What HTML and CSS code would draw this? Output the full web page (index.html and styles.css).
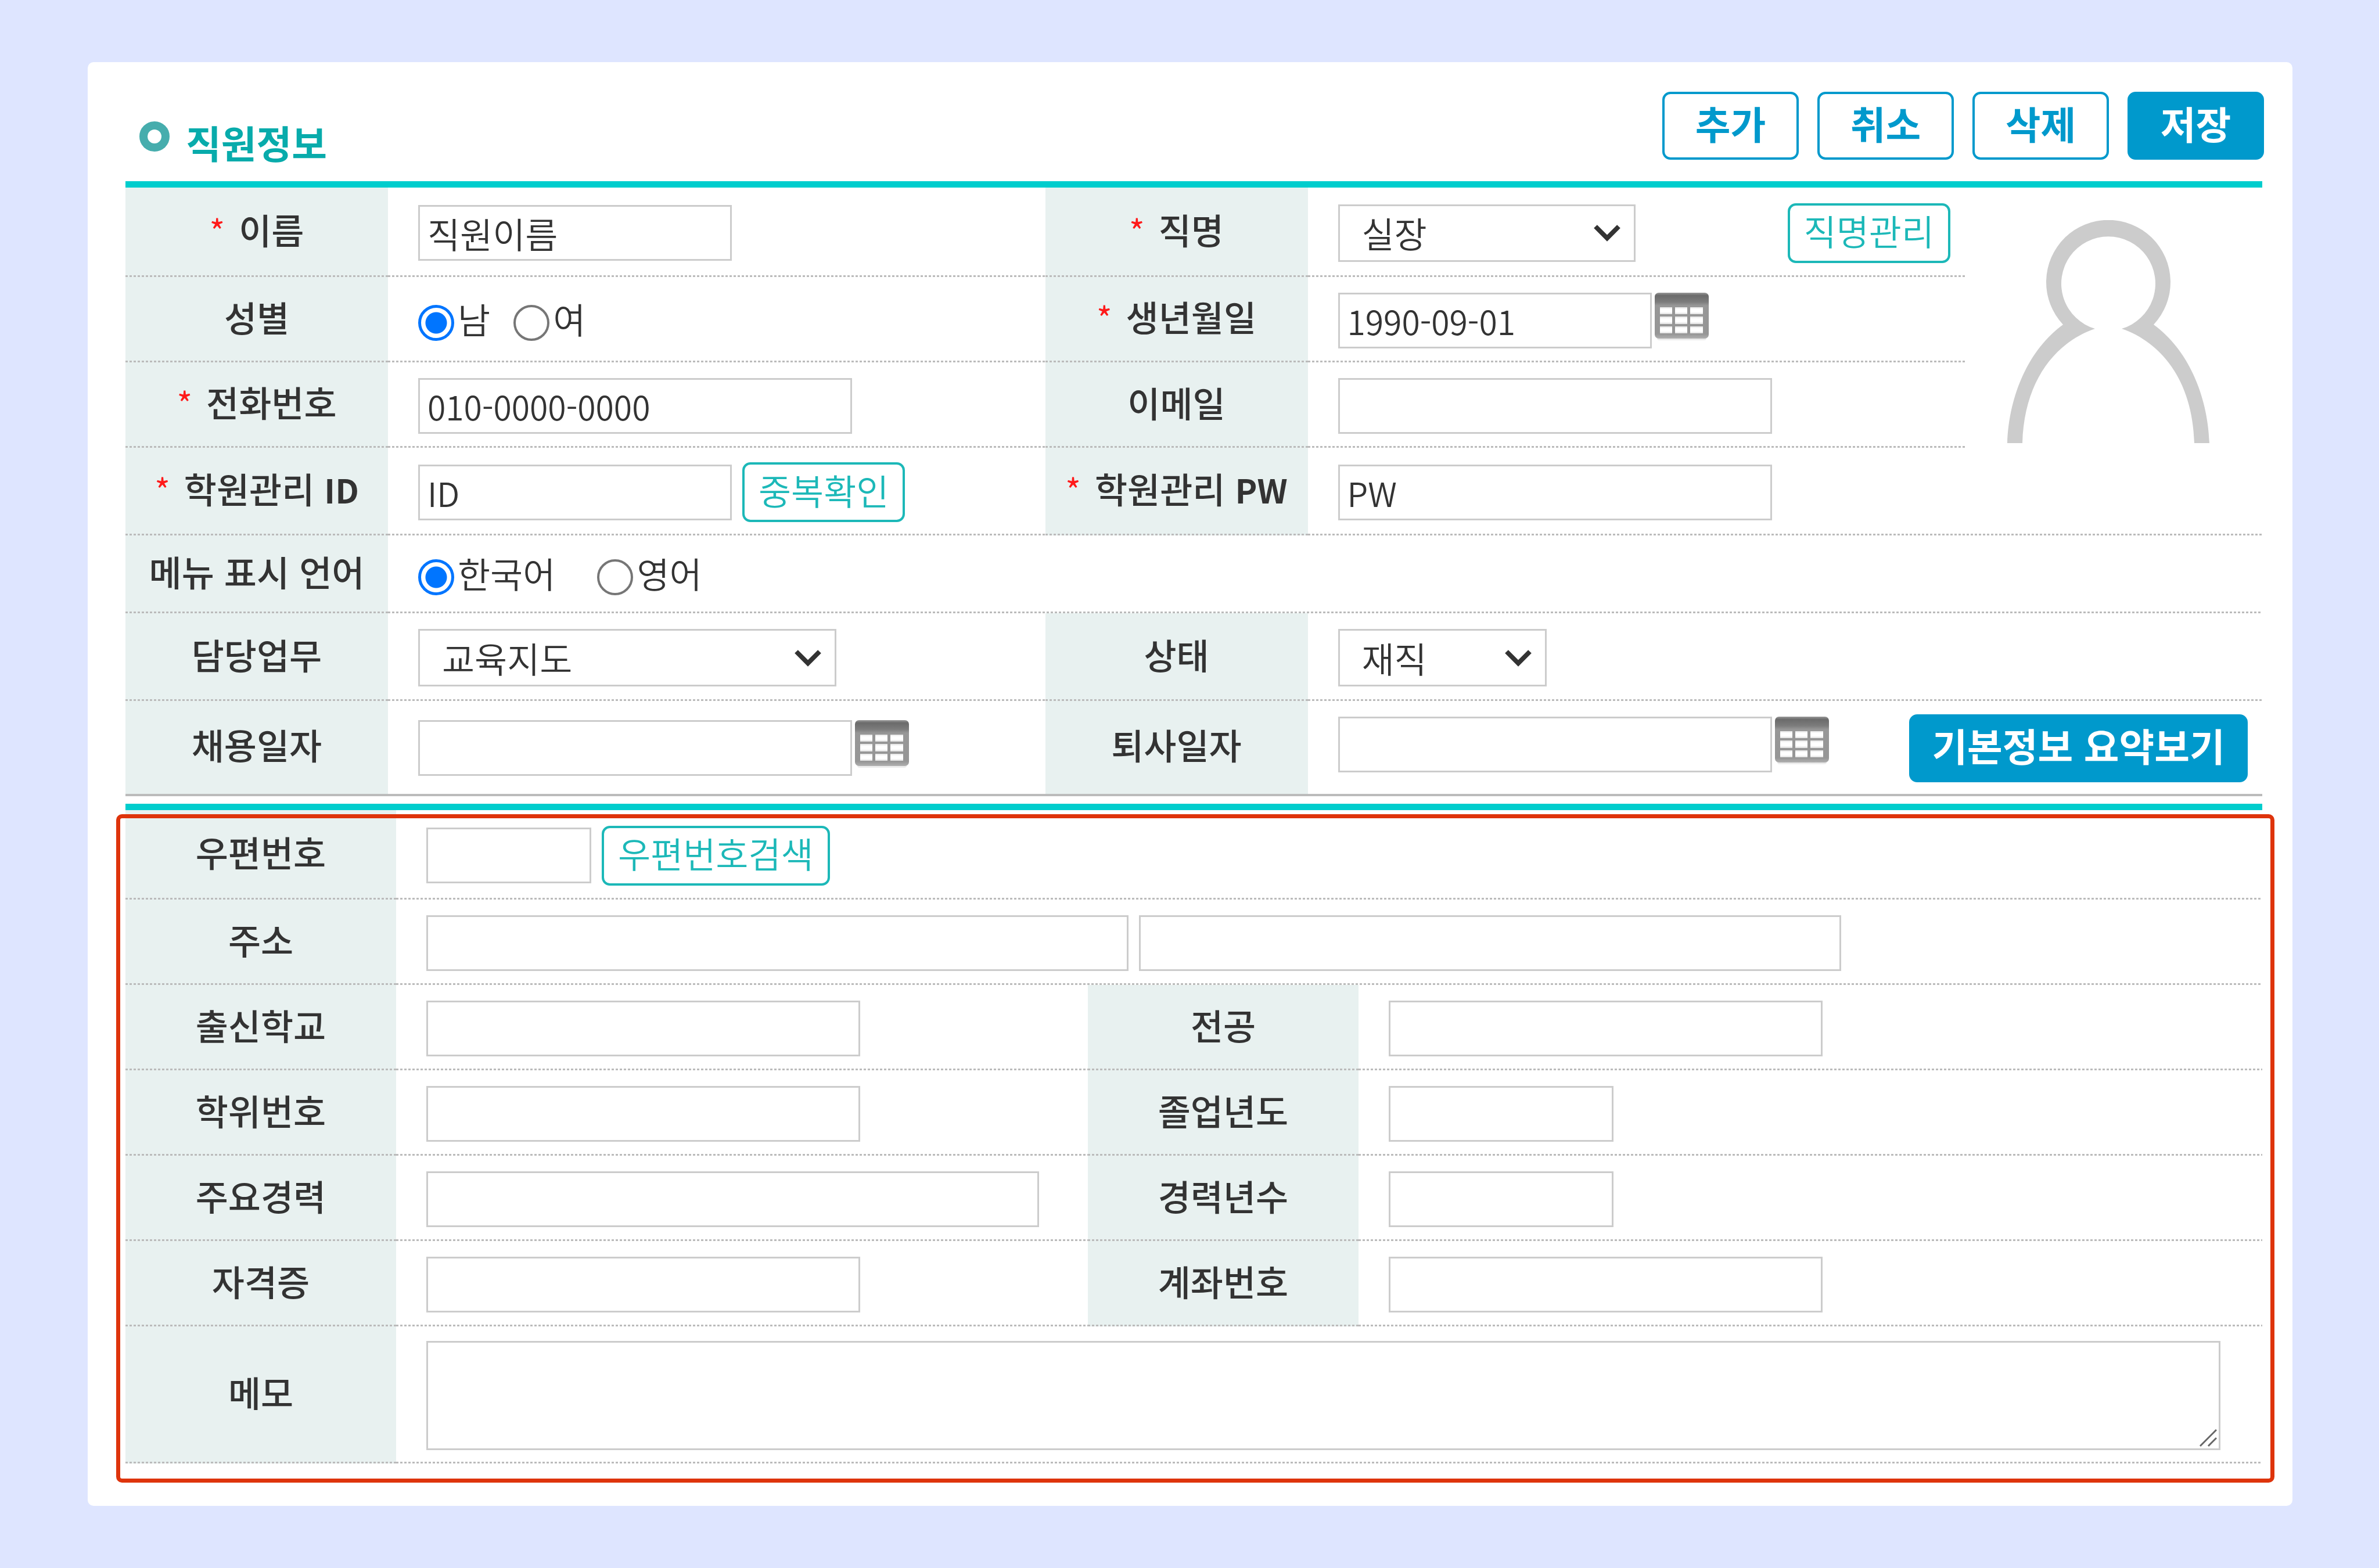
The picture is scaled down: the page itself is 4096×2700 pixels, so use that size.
FILE: index.html
```html
<!DOCTYPE html>
<html lang="ko">
<head>
<meta charset="utf-8">
<meta name="viewport" content="width=device-width, initial-scale=1">
<title>직원정보</title>
<link rel="stylesheet" href="styles.css">
</head>
<body>
<svg class="sprite" aria-hidden="true">
  <defs>
    <linearGradient id="cal-head" x1="0" y1="0" x2="0" y2="1">
      <stop offset="0" stop-color="#9a9a9a"/>
      <stop offset=".06" stop-color="#6b6b6b"/>
      <stop offset=".2" stop-color="#7c7c7c"/>
      <stop offset=".28" stop-color="#979797"/>
      <stop offset=".9" stop-color="#969696"/>
      <stop offset="1" stop-color="#b0b0b0"/>
    </linearGradient>
    <linearGradient id="cal-cell" x1="0" y1="0" x2="0" y2="1">
      <stop offset="0" stop-color="#e4e4e4"/>
      <stop offset=".3" stop-color="#fff"/>
      <stop offset=".7" stop-color="#fff"/>
      <stop offset="1" stop-color="#dedede"/>
    </linearGradient>
    <symbol id="calendar" viewBox="0 0 93 82">
      <rect x="4" y="74" width="85" height="8" rx="4" fill="#ececec"/>
      <rect width="93" height="79" rx="7" fill="url(#cal-head)"/>
      <g fill="url(#cal-cell)">
        <rect x="9" y="25" width="21" height="12"/><rect x="35" y="25" width="21" height="12"/><rect x="61" y="25" width="22" height="12"/>
        <rect x="9" y="41" width="21" height="13"/><rect x="35" y="41" width="21" height="13"/><rect x="61" y="41" width="22" height="13"/>
        <rect x="9" y="58" width="21" height="12"/><rect x="35" y="58" width="21" height="12"/><rect x="61" y="58" width="22" height="12"/>
      </g>
    </symbol>
  </defs>
</svg>

<main class="card">
  <form>
    <header class="header">
      <h1 class="title"><span class="ring"></span>직원정보</h1>
      <div class="actions">
        <button type="button" class="btn btn-line">추가</button>
        <button type="button" class="btn btn-line">취소</button>
        <button type="button" class="btn btn-line">삭제</button>
        <button type="submit" class="btn btn-fill">저장</button>
      </div>
    </header>

    <table class="sheet sheet-basic">
      <colgroup><col class="c-label"><col><col class="c-label"><col><col class="c-photo"></colgroup>
      <tbody>
        <tr class="r-first">
          <th scope="row"><label for="name"><span class="req">*</span>이름</label></th>
          <td><input class="field w-md" type="text" id="name" value="직원이름"></td>
          <th scope="row"><label for="position"><span class="req">*</span>직명</label></th>
          <td>
            <div class="cell">
              <select class="field select w-sel" id="position"><option>실장</option></select>
              <button type="button" class="btn-small push">직명관리</button>
            </div>
          </td>
          <td class="photo" rowspan="3">
            <svg class="avatar" viewBox="0 0 348 384" role="img" aria-label="사진">
              <path fill="#ccc" d="M0 384C3 300 38 222 96 180A107 107 0 1 1 252 180C310 222 345 300 348 384H322C319 275 264 210 197 187A81 81 0 1 0 151 187C84 210 29 275 26 384Z"/>
            </svg>
          </td>
        </tr>
        <tr class="r-base">
          <th scope="row">성별</th>
          <td>
            <div class="cell choices">
              <label class="choice"><input type="radio" name="gender" checked><span>남</span></label>
              <label class="choice"><input type="radio" name="gender"><span>여</span></label>
            </div>
          </td>
          <th scope="row"><label for="birth"><span class="req">*</span>생년월일</label></th>
          <td>
            <div class="date">
              <input class="field latin w-md" type="text" id="birth" value="1990-09-01">
              <button type="button" class="cal" aria-label="생년월일 선택"><svg><use href="#calendar"/></svg></button>
            </div>
          </td>
        </tr>
        <tr class="r-base">
          <th scope="row"><label for="phone"><span class="req">*</span>전화번호</label></th>
          <td><input class="field latin w-lg" type="text" id="phone" value="010-0000-0000"></td>
          <th scope="row"><label for="email">이메일</label></th>
          <td><input class="field latin w-lg" type="text" id="email"></td>
        </tr>
        <tr class="r-mid">
          <th scope="row"><label for="uid"><span class="req">*</span>학원관리 <b>ID</b></label></th>
          <td>
            <div class="cell">
              <input class="field latin w-md" type="text" id="uid" value="ID">
              <button type="button" class="btn-small">중복확인</button>
            </div>
          </td>
          <th scope="row"><label for="upw"><span class="req">*</span>학원관리 <b>PW</b></label></th>
          <td colspan="2"><input class="field latin w-lg" type="text" id="upw" value="PW"></td>
        </tr>
        <tr class="r-short">
          <th scope="row">메뉴 표시 언어</th>
          <td colspan="4">
            <div class="cell choices choices-wide">
              <label class="choice"><input type="radio" name="lang" checked><span>한국어</span></label>
              <label class="choice"><input type="radio" name="lang"><span>영어</span></label>
            </div>
          </td>
        </tr>
        <tr class="r-mid">
          <th scope="row"><label for="duty">담당업무</label></th>
          <td><select class="field select w-duty" id="duty"><option>교육지도</option></select></td>
          <th scope="row"><label for="state">상태</label></th>
          <td colspan="2"><select class="field select w-state" id="state"><option>재직</option></select></td>
        </tr>
        <tr class="r-last">
          <th scope="row"><label for="hired">채용일자</label></th>
          <td>
            <div class="date">
              <input class="field latin w-lg" type="text" id="hired">
              <button type="button" class="cal" aria-label="채용일자 선택"><svg><use href="#calendar"/></svg></button>
            </div>
          </td>
          <th scope="row"><label for="left">퇴사일자</label></th>
          <td colspan="2">
            <div class="cell cell-top">
              <div class="date">
                <input class="field latin w-lg" type="text" id="left">
                <button type="button" class="cal" aria-label="퇴사일자 선택"><svg><use href="#calendar"/></svg></button>
              </div>
              <button type="button" class="btn btn-fill btn-wide push">기본정보 요약보기</button>
            </div>
          </td>
        </tr>
      </tbody>
    </table>

    <section class="detail">
      <table class="sheet sheet-detail">
        <colgroup><col class="c-label"><col class="c-field"><col class="c-label"><col></colgroup>
        <tbody>
          <tr class="r-first">
            <th scope="row"><label for="zip">우편번호</label></th>
            <td colspan="3">
              <div class="cell">
                <input class="field latin w-zip" type="text" id="zip">
                <button type="button" class="btn-small">우편번호검색</button>
              </div>
            </td>
          </tr>
          <tr class="r-base">
            <th scope="row"><label for="addr">주소</label></th>
            <td colspan="3">
              <div class="cell">
                <input class="field w-addr" type="text" id="addr">
                <input class="field w-addr" type="text" aria-label="상세 주소">
              </div>
            </td>
          </tr>
          <tr class="r-base">
            <th scope="row"><label for="school">출신학교</label></th>
            <td><input class="field w-lg" type="text" id="school"></td>
            <th scope="row"><label for="major">전공</label></th>
            <td><input class="field w-lg" type="text" id="major"></td>
          </tr>
          <tr class="r-base">
            <th scope="row"><label for="degree">학위번호</label></th>
            <td><input class="field w-lg" type="text" id="degree"></td>
            <th scope="row"><label for="grad">졸업년도</label></th>
            <td><input class="field w-sm" type="text" id="grad"></td>
          </tr>
          <tr class="r-base">
            <th scope="row"><label for="career">주요경력</label></th>
            <td><input class="field w-xl" type="text" id="career"></td>
            <th scope="row"><label for="years">경력년수</label></th>
            <td><input class="field w-sm" type="text" id="years"></td>
          </tr>
          <tr class="r-base">
            <th scope="row"><label for="cert">자격증</label></th>
            <td><input class="field w-lg" type="text" id="cert"></td>
            <th scope="row"><label for="account">계좌번호</label></th>
            <td><input class="field w-lg" type="text" id="account"></td>
          </tr>
          <tr class="r-memo">
            <th scope="row"><label for="memo">메모</label></th>
            <td colspan="3" class="memo-cell"><textarea class="field memo" id="memo"></textarea></td>
          </tr>
        </tbody>
      </table>
    </section>
  </form>
</main>
</body>
</html>
```
FILE: styles.css
```css
:root {
  --teal: #00cdcd;
  --mint: #1cb8b8;
  --blue: #0099cc;
  --ink: #333;
  --line: #ccc;
  --dots: repeating-linear-gradient(90deg, #bbb 0 4px, transparent 4px 7px) left bottom / 100% 3px no-repeat;
}

* { box-sizing: border-box; }

body {
  margin: 0;
  padding: 107px 149px 106px 151px;
  background: #dee5ff;
  color: var(--ink);
  font: 350 61px/72px "Noto Sans CJK KR", "Noto Sans", sans-serif;
}

input, select, textarea, button {
  margin: 0;
  color: inherit;
  font: inherit;
}

.sprite { position: absolute; width: 0; height: 0; }

.card {
  padding: 51px 52px 73px 65px;
  border-radius: 10px;
  background: #fff;
}

/* Title bar */
.header {
  display: flex;
  justify-content: space-between;
  align-items: flex-start;
  padding-bottom: 30px;
}

.title {
  display: flex;
  align-items: center;
  gap: 28px;
  margin: 0;
  padding: 48px 0 0 24px;
  color: #08abab;
  font-size: 66px;
  font-weight: 700;
  line-height: 76px;
}

.ring {
  width: 52px;
  height: 52px;
  margin-bottom: 18px;
  border: 14px solid #46adad;
  border-radius: 50%;
}

.actions {
  display: flex;
  gap: 32px;
  margin-right: -3px;
}

.btn {
  width: 235px;
  height: 117px;
  padding: 0 0 12px;
  border: 4px solid var(--blue);
  border-radius: 14px;
  background: #fff;
  color: var(--blue);
  font-size: 66px;
  font-weight: 700;
}

.btn-fill { background: var(--blue); color: #fff; }
.btn-wide { width: 583px; }

.btn-small {
  height: 103px;
  padding: 0 24px 8px;
  border: 4px solid var(--mint);
  border-radius: 14px;
  background: #fff;
  color: var(--mint);
}

.push { margin-left: auto; }

/* Form sheets */
.sheet {
  width: 100%;
  border-top: 11px solid var(--teal);
  border-spacing: 0;
  table-layout: fixed;
}

.sheet th {
  padding: 0 0 10px;
  background: var(--dots), #e8f1f0;
  font-weight: 500;
  text-align: center;
  white-space: nowrap;
}

.sheet td {
  padding: 2px 25px 0 52px;
  background: var(--dots);
}

.sheet b { font-size: 57px; font-weight: 700; }

.sheet-basic .c-label { width: 452px; }
.sheet-basic .c-photo { width: 512px; }
.sheet-detail .c-label { width: 466px; }
.sheet-detail .c-field { width: 1191px; }

.r-first { height: 154px; }
.r-base { height: 147px; }
.r-mid { height: 151px; }
.r-short { height: 134px; }
.r-last { height: 164px; }
.r-memo { height: 236px; }

.r-last th { border-bottom: 4px solid #bbb; background: #e8f1f0; }
.r-last td { border-bottom: 4px solid #bbb; background: none; }

.req {
  margin-right: 24px;
  color: #ff1a1a;
  font-size: 57px;
  font-weight: 400;
}

.sheet .photo {
  padding: 56px 0 0 73px;
  background: none;
  vertical-align: top;
}

.avatar { display: block; width: 348px; height: 384px; }

.cell { display: flex; align-items: center; gap: 18px; }
.cell-top { align-items: flex-start; }
.cell-top .date { padding-top: 4px; }

/* Controls */
.field {
  display: block;
  height: 96px;
  padding: 0 13px;
  border: 3px solid var(--line);
  border-radius: 0;
  background: #fff;
}

.latin { font-size: 57px; }

.w-zip { width: 284px; }
.w-sm { width: 387px; }
.w-md { width: 540px; }
.w-lg { width: 747px; }
.w-xl { width: 1055px; }
.w-addr { width: 1209px; }
.w-sel { width: 512px; }
.w-duty { width: 720px; }
.w-state { width: 359px; }

.select {
  height: 99px;
  padding: 0 90px 0 38px;
  appearance: none;
  background: #fff url("data:image/svg+xml,%3Csvg xmlns='http://www.w3.org/2000/svg' viewBox='0 0 48 30'%3E%3Cpath d='M4 4l20 20L44 4' fill='none' stroke='%23333' stroke-width='8'/%3E%3C/svg%3E") right 22px center / 48px 30px no-repeat;
}

.date { display: flex; align-items: flex-start; gap: 5px; }

.cal {
  width: 93px;
  height: 82px;
  padding: 0;
  border: 0;
  background: none;
}

.cal svg { display: block; width: 100%; height: 100%; }

.choices { gap: 40px; }
.choices-wide { gap: 72px; }
.choice { display: flex; align-items: center; gap: 6px; }
.choice span { padding-bottom: 6px; }

.choice input {
  width: 62px;
  height: 62px;
  margin-top: 8px;
  border: 4px solid #767676;
  border-radius: 50%;
  appearance: none;
  background: #fff;
}

.choice input:checked {
  border: 5px solid #0075ff;
  background: radial-gradient(circle, #0075ff 18px, #fff 19px);
}

.sheet .memo-cell { padding-right: 72px; }

.memo {
  width: 100%;
  height: 188px;
  resize: none;
  background: #fff url("data:image/svg+xml,%3Csvg xmlns='http://www.w3.org/2000/svg' viewBox='0 0 30 30'%3E%3Cpath d='M1 29L29 1M15 29L29 15' fill='none' stroke='%23666' stroke-width='3'/%3E%3C/svg%3E") right 3px bottom 3px / 30px 30px no-repeat;
}

/* Highlight frame drawn over the detail section */
.detail { position: relative; margin-top: 13px; }

.detail::after {
  position: absolute;
  inset: 18px -21px -33px -16px;
  border: 7px solid #de340c;
  border-radius: 10px;
  content: "";
  pointer-events: none;
}
```
